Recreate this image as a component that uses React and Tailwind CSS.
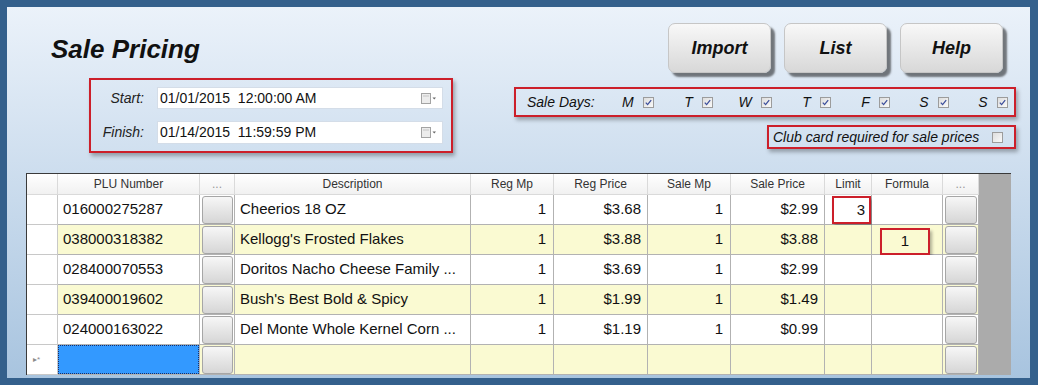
import React from 'react'

const rows = [
  { plu: '016000275287', desc: 'Cheerios 18 OZ', regMp: '1', regPrice: '$3.68', saleMp: '1', salePrice: '$2.99', limit: '3', formula: '' },
  { plu: '038000318382', desc: "Kellogg's Frosted Flakes", regMp: '1', regPrice: '$3.88', saleMp: '1', salePrice: '$3.88', limit: '', formula: '1' },
  { plu: '028400070553', desc: 'Doritos Nacho Cheese Family ...', regMp: '1', regPrice: '$3.69', saleMp: '1', salePrice: '$2.99', limit: '', formula: '' },
  { plu: '039400019602', desc: "Bush's Best Bold & Spicy", regMp: '1', regPrice: '$1.99', saleMp: '1', salePrice: '$1.49', limit: '', formula: '' },
  { plu: '024000163022', desc: 'Del Monte Whole Kernel Corn ...', regMp: '1', regPrice: '$1.19', saleMp: '1', salePrice: '$0.99', limit: '', formula: '' },
]

const days = ['M', 'T', 'W', 'T', 'F', 'S', 'S']

function CheckBox({ checked }) {
  return (
    <svg width="11" height="11" viewBox="0 0 11 11" className="shrink-0">
      <defs>
        <linearGradient id="cbg" x1="0" y1="0" x2="1" y2="1">
          <stop offset="0" stopColor="#dcdcdc" />
          <stop offset="1" stopColor="#fbfbfb" />
        </linearGradient>
      </defs>
      <rect x="0.5" y="0.5" width="10" height="10" fill="url(#cbg)" stroke="#9c9c9c" />
      {checked && <path d="M2.8 5.6 L4.6 7.6 L8.2 3.2" fill="none" stroke="#3d4f9c" strokeWidth="1.3" />}
    </svg>
  )
}

function CalendarIcon() {
  return (
    <svg width="16" height="11" viewBox="0 0 16 11">
      <rect x="0.5" y="0.5" width="9" height="10" fill="#ececec" stroke="#a3a3a3" />
      <line x1="2" y1="3" x2="8" y2="3" stroke="#c4c4c4" />
      <path d="M11.5 4.5 L15 4.5 L13.25 6.5 Z" fill="#666" />
    </svg>
  )
}

function BigButton({ children }) {
  return (
    <button className="flex h-[50px] w-[103px] items-center justify-center rounded-[7px] border border-[#c6c6c6] bg-linear-to-b from-[#f8f8f8] to-[#d8d8d8] text-[18px] font-bold italic text-[#111] shadow-[4px_4px_2px_rgba(0,0,0,0.5)]">
      {children}
    </button>
  )
}

function GridButton() {
  return (
    <div className="h-full w-full rounded-[3px] border border-[#a6a6a6] bg-linear-to-b from-[#f7f7f7] via-[#e6e6e6] to-[#d6d6d6]" />
  )
}

export default function App() {
  const cell = 'flex items-center border-r border-b border-[#b2b2b2] text-[15px] text-[#111]'
  const head = 'flex items-center justify-center border-r border-b border-[#dadada] bg-linear-to-b from-white to-[#f1f1f1] text-[12px] text-[#333]'

  return (
    <div className="h-[385px] w-[1038px] bg-[#34608c] pt-[7px] pr-[8px] pb-[7px] pl-[7px] font-['Liberation_Sans',Arial,sans-serif]">
      <div className="flex h-full flex-col bg-linear-to-b from-[#ebf2fa] to-[#a8c4df]">
        <div className="flex h-[166px] justify-between">
          <div className="flex flex-col">
            <h1 className="mt-[27px] ml-[44px] text-[26px] leading-[30px] font-bold italic text-[#111]">Sale Pricing</h1>
            <div className="mt-[14px] ml-[82px] flex w-[364px] flex-col gap-[12px] border-2 border-[#cc1f2a] pt-[7px] pb-[7px] shadow-[2px_3px_4px_rgba(0,0,0,0.3)]">
              <div className="flex items-center">
                <span className="w-[53px] text-right text-[14px] italic text-[#222]">Start:</span>
                <div className="ml-[13px] flex h-[22px] w-[286px] items-center justify-between border border-[#d4dde8] bg-white pl-[2px] pr-[5px]">
                  <span className="text-[14px] whitespace-pre text-[#111]">01/01/2015  12:00:00 AM</span>
                  <CalendarIcon />
                </div>
              </div>
              <div className="flex items-center">
                <span className="w-[53px] text-right text-[14px] italic text-[#222]">Finish:</span>
                <div className="ml-[13px] flex h-[23px] w-[286px] items-center justify-between border border-[#d4dde8] bg-white pl-[2px] pr-[5px]">
                  <span className="text-[14px] whitespace-pre text-[#111]">01/14/2015  11:59:59 PM</span>
                  <CalendarIcon />
                </div>
              </div>
            </div>
          </div>

          <div className="flex flex-col items-end pr-[14px]">
            <div className="mt-[16px] mr-[13px] flex gap-[13px]">
              <BigButton>Import</BigButton>
              <BigButton>List</BigButton>
              <BigButton>Help</BigButton>
            </div>
            <div className="mt-[14px] flex h-[30px] w-[502px] items-center border-2 border-[#cc1f2a] pl-[11px] pr-[10px] shadow-[2px_3px_4px_rgba(0,0,0,0.3)]">
              <span className="shrink-0 text-[14px] whitespace-nowrap italic text-[#111]">Sale Days:</span>
              <div className="ml-auto flex">
                {days.map((d, i) => (
                  <div key={i} className="flex w-[59px] items-center justify-end gap-[9px]">
                    <span className="text-[14px] italic text-[#111]">{d}</span>
                    <CheckBox checked />
                  </div>
                ))}
              </div>
            </div>
            <div className="mt-[8px] flex h-[24px] w-[249px] items-center justify-between border-2 border-[#cc1f2a] pl-[4px] pr-[11px] shadow-[2px_3px_4px_rgba(0,0,0,0.3)]">
              <span className="text-[14px] whitespace-nowrap italic text-[#111]">Club card required for sale prices</span>
              <CheckBox />
            </div>
          </div>
        </div>

        <div className="ml-[19px] grid w-[985px] grid-cols-[31px_142px_35px_236px_83px_94px_83px_94px_47px_71px_36px_32px] grid-rows-[21px_repeat(6,30px)] border-t border-l border-[#3a3a3a] bg-[#ababab]">
          <div className={head} />
          <div className={head}>PLU Number</div>
          <div className={`${head} text-[#999]`}>...</div>
          <div className={head}>Description</div>
          <div className={head}>Reg Mp</div>
          <div className={head}>Reg Price</div>
          <div className={head}>Sale Mp</div>
          <div className={head}>Sale Price</div>
          <div className={head}>Limit</div>
          <div className={head}>Formula</div>
          <div className={`${head} text-[#999]`}>...</div>
          <div />

          {rows.map((r, i) => {
            const bg = i % 2 === 1 ? 'bg-[#fafad2]' : 'bg-white'
            return (
              <React.Fragment key={r.plu}>
                <div className="border-r border-b border-[#c8c8c8] bg-white" />
                <div className={`${cell} ${bg} pl-[5px]`}>{r.plu}</div>
                <div className={`${cell} ${bg} pt-[1px] pr-[1px] pl-[2px]`}><GridButton /></div>
                <div className={`${cell} ${bg} pl-[5px]`}>{r.desc}</div>
                <div className={`${cell} ${bg} justify-end pr-[7px]`}>{r.regMp}</div>
                <div className={`${cell} ${bg} justify-end pr-[6px]`}>{r.regPrice}</div>
                <div className={`${cell} ${bg} justify-end pr-[7px]`}>{r.saleMp}</div>
                <div className={`${cell} ${bg} justify-end pr-[6px]`}>{r.salePrice}</div>
                <div className={`${cell} ${bg} relative`}>
                  {r.limit && (
                    <div className="absolute top-[1px] left-[7px] flex h-[28px] w-[39px] items-center justify-end border-2 border-[#cc1f2a] bg-white pr-[4px] shadow-[2px_3px_3px_rgba(0,0,0,0.3)]">
                      {r.limit}
                    </div>
                  )}
                </div>
                <div className={`${cell} ${bg} relative`}>
                  {r.formula && (
                    <div className="absolute top-[3px] left-[8px] flex h-[27px] w-[50px] items-center justify-center border-2 border-[#cc1f2a] bg-[#fafad2] shadow-[2px_3px_3px_rgba(0,0,0,0.3)]">
                      {r.formula}
                    </div>
                  )}
                </div>
                <div className={`${cell} ${bg} pt-[1px] pr-[1px] pl-[2px]`}><GridButton /></div>
                <div />
              </React.Fragment>
            )
          })}

          <div className="flex items-center border-r border-b border-[#c8c8c8] bg-white pl-[6px] text-[8px] text-[#8a8a8a]">▸*</div>
          <div className={`${cell} bg-[#fafad2]`}>
            <div className="h-full w-full border border-dotted border-[#1c2f66] bg-[#3399ff]" />
          </div>
          <div className={`${cell} bg-[#fafad2] pt-[1px] pr-[1px] pl-[2px]`}><GridButton /></div>
          <div className={`${cell} bg-[#fafad2]`} />
          <div className={`${cell} bg-[#fafad2]`} />
          <div className={`${cell} bg-[#fafad2]`} />
          <div className={`${cell} bg-[#fafad2]`} />
          <div className={`${cell} bg-[#fafad2]`} />
          <div className={`${cell} bg-[#fafad2]`} />
          <div className={`${cell} bg-[#fafad2]`} />
          <div className={`${cell} bg-[#fafad2] pt-[1px] pr-[1px] pl-[2px]`}><GridButton /></div>
          <div />
        </div>
      </div>
    </div>
  )
}
